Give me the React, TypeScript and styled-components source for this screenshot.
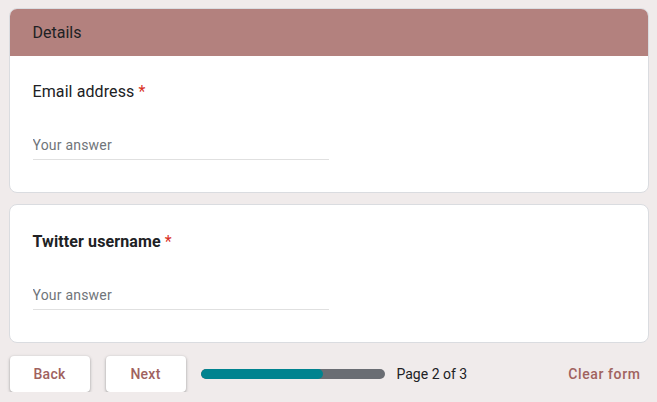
import styled, { createGlobalStyle } from "styled-components";

const GlobalStyle = createGlobalStyle`
  html, body {
    margin: 0;
    padding: 0;
    background: #f0ebeb;
    font-family: Roboto, "Liberation Sans", Arial, sans-serif;
  }
`;

export default function App() {
  return (
    <>
      <GlobalStyle />
      <Page>
        <Card>
          <CardHeader>Details</CardHeader>
          <CardBody>
            <Question>
              Email address <Required>*</Required>
            </Question>
            <AnswerInput placeholder="Your answer" />
          </CardBody>
        </Card>
        <Card>
          <CardBody $top={25}>
            <Question $bold>
              Twitter username <Required>*</Required>
            </Question>
            <AnswerInput placeholder="Your answer" />
          </CardBody>
        </Card>
        <Footer>
          <NavButton>Back</NavButton>
          <NavButton>Next</NavButton>
          <Progress>
            <ProgressTrack>
              <ProgressFill style={{ width: `${(2 / 3) * 100}%` }} />
            </ProgressTrack>
            <PageText>Page 2 of 3</PageText>
          </Progress>
          <ClearForm>Clear form</ClearForm>
        </Footer>
      </Page>
    </>
  );
}

const Page = styled.div`
  width: 640px;
  margin: 0 auto;
  padding-top: 8px;
  display: flex;
  flex-direction: column;
  gap: 11px;
`;
const Card = styled.div`
  background: #ffffff;
  border: 1px solid #dadce0;
  border-radius: 8px;
  overflow: hidden;
`;
const CardHeader = styled.div`
  height: 48px;
  margin: -1px -1px 0;
  padding: 0 24px;
  display: flex;
  align-items: center;
  background: #b3817e;
  color: #202124;
  font-size: 16px;
`;
const CardBody = styled.div<{ $top?: number }>`
  padding: ${(p) => p.$top ?? 24}px 23px 32px;
  display: flex;
  flex-direction: column;
`;
const Question = styled.div<{ $bold?: boolean }>`
  font-size: 16px;
  line-height: 24px;
  color: #202124;
  font-weight: ${(p) => (p.$bold ? 700 : 400)};
  letter-spacing: 0.1px;
`;
const Required = styled.span`
  color: #d93025;
  font-weight: 400;
`;
const AnswerInput = styled.input`
  margin-top: 31px;
  width: 296px;
  padding: 0 0 4px;
  border: none;
  border-bottom: 1px solid #e0e0e0;
  outline: none;
  background: transparent;
  font-family: Roboto, "Liberation Sans", Arial, sans-serif;
  font-size: 14px;
  line-height: 20px;
  letter-spacing: 0.2px;
  color: #202124;
  &::placeholder {
    color: #70757a;
  }
`;
const Footer = styled.div`
  display: flex;
  align-items: center;
  padding: 2px 8px 0 1px;
  gap: 16px;
`;
const NavButton = styled.button`
  width: 80px;
  height: 36px;
  border: none;
  border-radius: 4px;
  background: #ffffff;
  box-shadow: 0 1px 2px rgba(60, 64, 67, 0.3), 0 1px 3px 1px rgba(60, 64, 67, 0.15);
  color: #a0625e;
  font-family: Roboto, "Liberation Sans", Arial, sans-serif;
  font-size: 14px;
  font-weight: 500;
  letter-spacing: 0.25px;
  cursor: pointer;
`;
const Progress = styled.div`
  flex: 1;
  display: flex;
  align-items: center;
  gap: 12px;
  margin-left: -1px;
`;
const ProgressTrack = styled.div`
  width: 184px;
  height: 10px;
  border-radius: 5px;
  background: #6a6d73;
  overflow: hidden;
`;
const ProgressFill = styled.div`
  height: 100%;
  border-radius: 5px;
  background: #00838f;
`;
const PageText = styled.span`
  font-size: 14px;
  color: #202124;
`;
const ClearForm = styled.span`
  color: #a0625e;
  font-size: 14px;
  font-weight: 500;
  letter-spacing: 0.6px;
`;
